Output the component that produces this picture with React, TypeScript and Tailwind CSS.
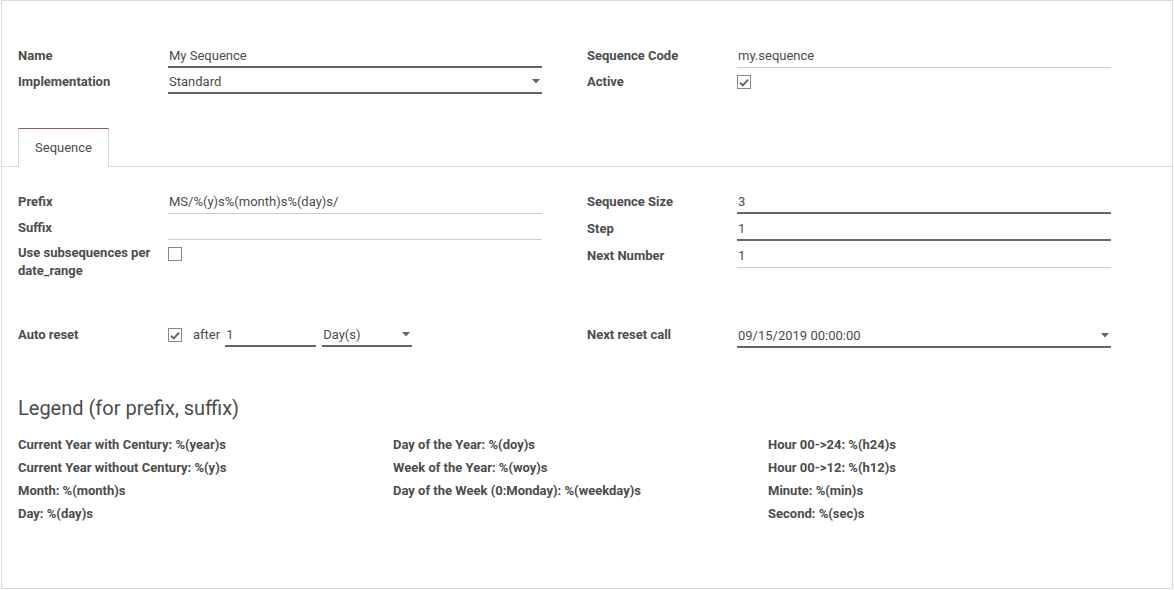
const font = { fontFamily: "Roboto, 'Noto Sans', sans-serif" };

const Caret = () => (
  <svg width="8" height="5" viewBox="0 0 8 5" className="shrink-0">
    <path d="M0 0 L8 0 L4 4.5 Z" fill="#666" />
  </svg>
);

const Check = ({ checked }: { checked?: boolean }) => (
  <div className="w-[14px] h-[14px] border border-[#888] bg-white flex items-center justify-center shrink-0">
    {checked && (
      <svg width="10" height="9" viewBox="0 0 10 9">
        <path d="M1 4.8 L3.8 7.4 L9 1.6" stroke="#666" strokeWidth="2" fill="none" />
      </svg>
    )}
  </div>
);

const Input = ({
  value,
  dark,
  select,
  w = "w-[374px]",
}: {
  value?: string;
  dark?: boolean;
  select?: boolean;
  w?: string;
}) => (
  <div
    className={`${w} h-[23px] flex items-start justify-between text-[13px] leading-[21px] text-[#4c4c4c] ${
      dark ? "border-b-2 border-[#666]" : "border-b border-[#ccc]"
    }`}
  >
    <span className="pl-[1px]">{value}</span>
    {select && (
      <span className="pr-[2px] pt-[8px]">
        <Caret />
      </span>
    )}
  </div>
);

const Label = ({ children }: { children: React.ReactNode }) => (
  <div className="w-[150px] shrink-0 text-[13px] leading-[21px] font-bold text-[#4c4c4c]">{children}</div>
);

const Row = ({ label, children, mb = "mb-[3px]" }: { label: React.ReactNode; children: React.ReactNode; mb?: string }) => (
  <div className={`flex items-start ${mb}`}>
    <Label>{label}</Label>
    {children}
  </div>
);

const legend = [
  ["Current Year with Century: %(year)s", "Current Year without Century: %(y)s", "Month: %(month)s", "Day: %(day)s"],
  ["Day of the Year: %(doy)s", "Week of the Year: %(woy)s", "Day of the Week (0:Monday): %(weekday)s"],
  ["Hour 00->24: %(h24)s", "Hour 00->12: %(h12)s", "Minute: %(min)s", "Second: %(sec)s"],
];

export default function App() {
  return (
    <div className="w-[1174px] h-[590px] bg-white pl-[1px]" style={font}>
      <div className="w-[1172px] h-[589px] border border-[#d9d9d9] bg-white flex flex-col">
        {/* header group */}
        <div className="flex px-[16px] pt-[44px]">
          <div className="w-[569px]">
            <Row label="Name">
              <Input value="My Sequence" dark />
            </Row>
            <Row label="Implementation">
              <Input value="Standard" dark select />
            </Row>
          </div>
          <div>
            <Row label="Sequence Code">
              <Input value="my.sequence" />
            </Row>
            <Row label="Active">
              <div className="pt-[4px]">
                <Check checked />
              </div>
            </Row>
          </div>
        </div>

        {/* tabs */}
        <div className="mt-[31px] border-b border-[#d9d9d9] pl-[16px] flex">
          <div className="w-[91px] h-[39px] -mb-px border-t border-x border-t-[#875a7b] border-x-[#d9d9d9] bg-white flex items-center justify-center text-[13px] text-[#4c4c4c]">
            Sequence
          </div>
        </div>

        {/* tab content */}
        <div className="flex px-[16px] pt-[24px]">
          <div className="w-[569px]">
            <Row label="Prefix">
              <Input value="MS/%(y)s%(month)s%(day)s/" />
            </Row>
            <Row label="Suffix">
              <Input value="" />
            </Row>
            <div className="flex items-start">
              <div className="w-[150px] shrink-0 text-[13px] leading-[18px] pt-[1px] font-bold text-[#4c4c4c]">
                Use subsequences per
                <br />
                date_range
              </div>
              <div className="pt-[4px]">
                <Check />
              </div>
            </div>
          </div>
          <div>
            <Row label="Sequence Size" mb="mb-[4px]">
              <Input value="3" dark />
            </Row>
            <Row label="Step" mb="mb-[4px]">
              <Input value="1" dark />
            </Row>
            <Row label="Next Number">
              <Input value="1" />
            </Row>
          </div>
        </div>

        <div className="flex px-[16px] pt-[44px]">
          <div className="w-[569px]">
            <Row label="Auto reset">
              <div className="flex items-start">
                <div className="pt-[4px]">
                  <Check checked />
                </div>
                <span className="ml-[11px] mr-[5px] text-[13px] leading-[21px] text-[#4c4c4c]">after</span>
                <Input value="1" dark w="w-[91px]" />
                <div className="w-[6px]" />
                <Input value="Day(s)" dark select w="w-[90px]" />
              </div>
            </Row>
          </div>
          <div>
            <Row label="Next reset call">
              <div className="pt-[1px]">
                <Input value="09/15/2019 00:00:00" dark select />
              </div>
            </Row>
          </div>
        </div>

        {/* legend */}
        <div className="px-[16px] pt-[45px]">
          <h2 className="text-[20px] leading-[24px] text-[#4c4c4c]">Legend (for prefix, suffix)</h2>
          <div className="flex mt-[13px]">
            {legend.map((col, i) => (
              <div key={i} className="w-[375px]">
                {col.map((t) => (
                  <div key={t} className="text-[13px] leading-[23px] font-bold text-[#4c4c4c]">
                    {t}
                  </div>
                ))}
              </div>
            ))}
          </div>
        </div>
      </div>
    </div>
  );
}
